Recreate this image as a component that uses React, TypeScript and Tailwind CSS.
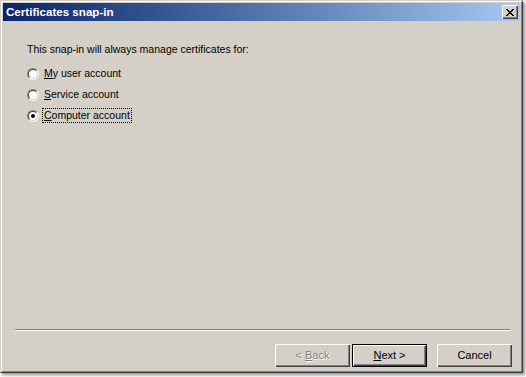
import React from "react";

const font = { fontFamily: '"Liberation Sans", Arial, sans-serif' };

function Radio({ checked }: { checked?: boolean }) {
  return (
    <span className="relative inline-flex w-[12px] h-[12px] rounded-full border border-t-[#808080] border-l-[#808080] border-b-white border-r-white shrink-0">
      <span className="flex-1 rounded-full border border-t-[#404040] border-l-[#404040] border-b-[#d4d0c8] border-r-[#d4d0c8] bg-white flex items-center justify-center">
        {checked && <span className="w-[4px] h-[4px] rounded-full bg-black" />}
      </span>
    </span>
  );
}

function Btn({
  children,
  def,
  disabled,
}: {
  children: React.ReactNode;
  def?: boolean;
  disabled?: boolean;
}) {
  const base =
    "w-[75px] h-[23px] bg-[#d4d0c8] flex items-center justify-center text-[11px]";
  const shadow = def
    ? "border border-black shadow-[inset_1px_1px_#fff,inset_-1px_-1px_#404040,inset_-2px_-2px_#808080]"
    : "shadow-[inset_1px_1px_#fff,inset_-1px_-1px_#404040,inset_-2px_-2px_#808080]";
  return (
    <div
      className={`${base} ${shadow} ${disabled ? "text-[#808080] [text-shadow:1px_1px_#fff]" : "text-black"}`}
    >
      {children}
    </div>
  );
}

export default function App() {
  return (
    <div className="w-[526px] h-[377px] bg-white" style={font}>
      <div className="w-[523px] h-[373px] bg-[#d4d0c8] border border-t-[#d4d0c8] border-l-[#d4d0c8] border-r-[#404040] border-b-[#404040] shadow-[inset_1px_1px_#fff,inset_-1px_-1px_#808080,2px_2px_3px_rgba(0,0,0,0.45)] p-[2px] flex flex-col">
        {/* title bar */}
        <div className="h-[18px] bg-gradient-to-r from-[#0a246a] to-[#a6caf0] flex items-center pl-[3px] pr-[2px]">
          <span className="text-white font-bold text-[11.6px] leading-none">
            Certificates snap-in
          </span>
          <div className="ml-auto w-[16px] h-[14px] bg-[#d4d0c8] shadow-[inset_1px_1px_#fff,inset_-1px_-1px_#404040,inset_-2px_-2px_#808080] flex items-center justify-center">
            <svg width="8" height="7" viewBox="0 0 8 7" shapeRendering="crispEdges">
              <path
                fill="#000"
                d="M0 0h2v1H0zM6 0h2v1H6zM1 1h2v1H1zM5 1h2v1H5zM2 2h4v1H2zM3 3h2v1H3zM2 4h4v1H2zM1 5h2v1H1zM5 5h2v1H5zM0 6h2v1H0zM6 6h2v1H6z"
              />
            </svg>
          </div>
        </div>

        {/* body */}
        <div className="flex-1 pl-[24px] pt-[22px] text-[10.5px] text-black">
          <div className="leading-[13px]">
            This snap-in will always manage certificates for:
          </div>
          <div className="mt-[11px] flex flex-col gap-[8px]">
            <div className="flex items-center gap-[5px] h-[13px]">
              <Radio />
              <span className="leading-[13px]">
                <span className="underline">M</span>y user account
              </span>
            </div>
            <div className="flex items-center gap-[5px] h-[13px]">
              <Radio />
              <span className="leading-[13px]">
                <span className="underline">S</span>ervice account
              </span>
            </div>
            <div className="flex items-center gap-[4px] h-[13px]">
              <Radio checked />
              <span className="leading-[13px] outline-1 outline-dotted outline-black px-[1px]">
                <span className="underline">C</span>omputer account
              </span>
            </div>
          </div>
        </div>

        {/* separator */}
        <div className="ml-[12px] mr-[10px] h-[2px] border-t border-t-[#808080] border-b border-b-white" />

        {/* buttons */}
        <div className="flex justify-end pr-[8px] pt-[13px] pb-[3px]">
          <Btn disabled>
            &lt; <span className="underline ml-[3px]">B</span>ack
          </Btn>
          <div className="w-[2px]" />
          <Btn def>
            <span className="underline">N</span>ext &gt;
          </Btn>
          <div className="w-[10px]" />
          <Btn>Cancel</Btn>
        </div>
      </div>
    </div>
  );
}
